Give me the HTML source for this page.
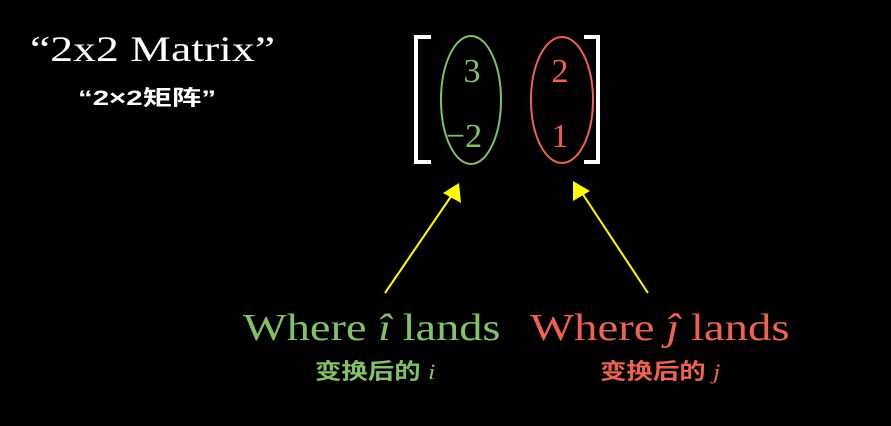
<!DOCTYPE html>
<html><head><meta charset="utf-8"><style>
body{margin:0;width:891px;height:426px;background:#000;overflow:hidden;position:relative;font-family:"Liberation Serif",serif}
.t{position:absolute;white-space:nowrap;line-height:1;transform-origin:0 0}
.cj{font-family:"Liberation Sans","Noto Sans CJK SC",sans-serif;font-weight:bold}
.g{color:#83c167}.r{color:#ec6352}
</style></head><body>
<div class="t" style="left:30px;top:31px;font-size:36px;color:#fff;transform:scaleX(1.27)">“2x2 Matrix”</div>
<div class="t cj" style="left:78px;top:88px;font-size:21px;color:#fff;transform:scaleX(1.4)">“2×2矩阵”</div>
<svg width="891" height="426" style="position:absolute;left:0;top:0">
<path d="M431 37H416V162H431M584 37H598V162H584" fill="none" stroke="#fff" stroke-width="4"/>
<ellipse cx="471" cy="100" rx="30" ry="64" fill="none" stroke="#83c167" stroke-width="2"/>
<ellipse cx="562" cy="100" rx="31" ry="63" fill="none" stroke="#ec6352" stroke-width="2"/>
<text x="472" y="82" fill="#83c167" font-size="34" text-anchor="middle" font-family="Liberation Serif">3</text>
<text x="464" y="147" fill="#83c167" font-size="34" text-anchor="middle" font-family="Liberation Serif">−2</text>
<text x="560" y="82" fill="#ec6352" font-size="34" text-anchor="middle" font-family="Liberation Serif">2</text>
<text x="560" y="147" fill="#ec6352" font-size="34" text-anchor="middle" font-family="Liberation Serif">1</text>
<line x1="385" y1="293" x2="452" y2="195" stroke="#ff0" stroke-width="2"/>
<polygon points="459,183 461,203 443,193" fill="#ff0"/>
<line x1="648" y1="293" x2="582" y2="193" stroke="#ff0" stroke-width="2"/>
<polygon points="573,181 590,191 573,201" fill="#ff0"/>
</svg>
<div class="t g" style="left:243px;top:309px;font-size:38px;transform:scaleX(1.22)">Where <i>î</i> lands</div>
<div class="t r" style="left:530px;top:309px;font-size:38px;transform:scaleX(1.23)">Where <i>ĵ</i> lands</div>
<div class="t cj g" style="left:315px;top:361px;font-size:22px;transform:scaleX(1.2)">变换后的 <i style="font-family:'Liberation Serif',serif;font-weight:normal">i</i></div>
<div class="t cj r" style="left:600px;top:361px;font-size:22px;transform:scaleX(1.2)">变换后的 <i style="font-family:'Liberation Serif',serif;font-weight:normal">j</i></div>
</body></html>
